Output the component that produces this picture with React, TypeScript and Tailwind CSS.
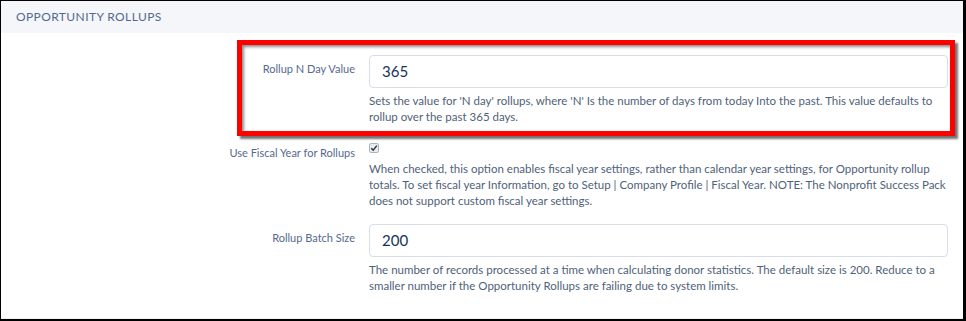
const font = { fontFamily: 'Lato, "Liberation Sans", sans-serif' };

function Field({
  label,
  value,
  help,
}: {
  label: string;
  value: string;
  help: string;
}) {
  return (
    <div className="flex gap-[14px]">
      <div className="w-[354px] pt-[6px] text-right text-[11px] leading-[16px] text-[#54698d]">
        {label}
      </div>
      <div className="w-[579px]">
        <div className="flex h-[33px] items-center rounded-[4px] border border-[#d8dde6] bg-white px-[12px] text-[15px] text-[#16325c]">
          {value}
        </div>
        <p className="mt-[5px] text-[11.5px] leading-[16px] text-[#4f5f7a]">{help}</p>
      </div>
    </div>
  );
}

export default function App() {
  return (
    <div
      className="flex h-[321px] w-[966px] flex-col overflow-hidden border-t border-l border-r-[3px] border-b-[2px] border-black bg-white"
      style={font}
    >
      <div className="flex h-[32px] shrink-0 items-center bg-[#f4f6f9] px-[15px] text-[12px] tracking-[0.4px] text-[#54698d]">
        OPPORTUNITY ROLLUPS
      </div>

      <div className="relative flex-1 border-b border-[#eef1f6]">
        <div
          className="pointer-events-none absolute left-[236px] top-[7px] h-[96px] w-[718px] border-[5px] border-[#ff0000]"
          style={{ boxShadow: "3px 3px 2px rgba(0,0,0,0.55), inset 2px 2px 3px rgba(0,0,0,0.45)" }}
        />

        <div className="pt-[22px]">
          <Field
            label="Rollup N Day Value"
            value="365"
            help="Sets the value for 'N day' rollups, where 'N' Is the number of days from today Into the past. This value defaults to rollup over the past 365 days."
          />
        </div>

        <div className="mt-[18px] flex gap-[14px]">
          <div className="w-[354px] pt-[2px] text-right text-[11px] leading-[16px] text-[#54698d]">
            Use Fiscal Year for Rollups
          </div>
          <div className="w-[579px]">
            <div className="flex h-[10px] w-[10px] items-center justify-center rounded-[2px] border border-[#a8b7c7] bg-[#e8ebef]">
              <svg viewBox="0 0 10 10" className="h-[8px] w-[8px]">
                <path d="M1.5 5.2 L4 7.6 L8.5 2" fill="none" stroke="#333" strokeWidth="1.8" />
              </svg>
            </div>
            <p className="mt-[8px] text-[11.5px] leading-[16px] text-[#4f5f7a]">
              When checked, this option enables fiscal year settings, rather than calendar year settings, for Opportunity rollup totals. To set fiscal year Information, go to Setup | Company Profile | Fiscal Year. NOTE: The Nonprofit Success Pack does not support custom fiscal year settings.
            </p>
          </div>
        </div>

        <div className="mt-[15px]">
          <Field
            label="Rollup Batch Size"
            value="200"
            help="The number of records processed at a time when calculating donor statistics. The default size is 200. Reduce to a smaller number if the Opportunity Rollups are failing due to system limits."
          />
        </div>
      </div>
    </div>
  );
}
